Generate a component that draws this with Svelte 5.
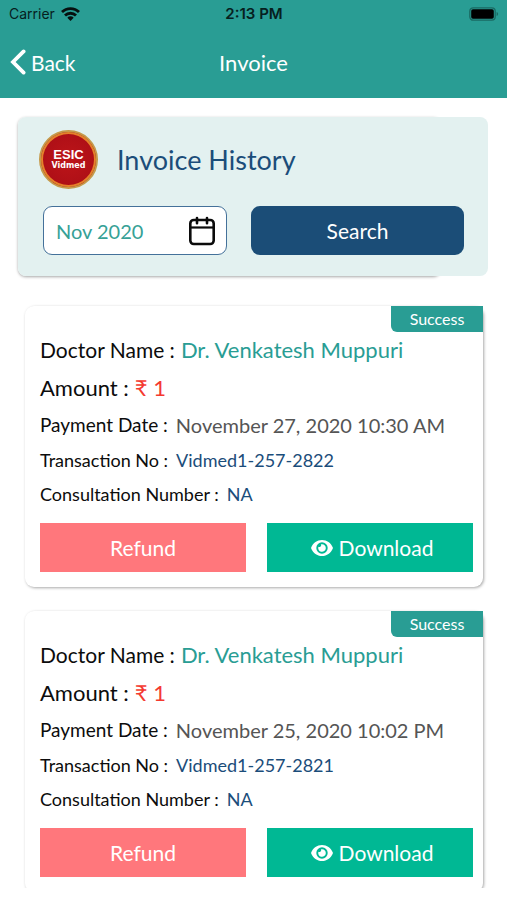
<script>
  let month = $state('Nov 2020');

  const invoices = [
    { doctor: 'Dr. Venkatesh Muppuri', amount: '₹ 1', date: 'November 27, 2020 10:30 AM', transaction: 'Vidmed1-257-2822', consultation: 'NA', status: 'Success' },
    { doctor: 'Dr. Venkatesh Muppuri', amount: '₹ 1', date: 'November 25, 2020 10:02 PM', transaction: 'Vidmed1-257-2821', consultation: 'NA', status: 'Success' }
  ];
</script>

<div class="screen">
  <header>
    <div class="status-bar">
      <div class="carrier">
        <span>Carrier</span>
        <svg width="19" height="14" viewBox="0 0 19 14" aria-hidden="true">
          <g fill="none" stroke="#06100f" stroke-width="2.8">
            <path d="M1 5.1a12 12 0 0 1 17 0" />
            <path d="M4 8.5a7.8 7.8 0 0 1 11 0" />
          </g>
          <path d="M6.3 10.7a4.5 4.5 0 0 1 6.4 0L9.5 13.9z" fill="#06100f" />
        </svg>
      </div>
      <span class="time">2:13 PM</span>
      <svg class="battery" width="30" height="14" viewBox="0 0 30 14" aria-hidden="true">
        <rect x="0.8" y="0.8" width="25.4" height="12.4" rx="3.4" fill="none" stroke="#1a6a63" stroke-width="1.3" />
        <rect x="2.2" y="2.2" width="22.6" height="9.6" rx="1.8" fill="#000" />
        <path d="M27.6 5v4c2-.7 2-3.3 0-4z" fill="#1a6a63" />
      </svg>
    </div>
    <nav>
      <a class="back" href="#back">
        <svg width="16" height="26" viewBox="0 0 16 26" aria-hidden="true">
          <path d="M13.6 2.4 3 13l10.600 10.600" fill="none" stroke="#fff" stroke-width="3.8" stroke-linecap="round" stroke-linejoin="miter" />
        </svg>
        <span>Back</span>
      </a>
      <h1>Invoice</h1>
    </nav>
  </header>

  <main>
    <section class="panel">
      <div class="panel-title">
        <div class="logo"><strong>ESIC</strong><span>Vidmed</span></div>
        <h2>Invoice History</h2>
      </div>
      <form class="filters" onsubmit={(e) => e.preventDefault()}>
        <div class="month">
          <input type="text" aria-label="Month" bind:value={month} />
          <button type="button" class="pick" aria-label="Choose month">
            <svg width="28" height="30" viewBox="0 0 28 30" fill="none" stroke="#0b0b0b" stroke-width="2.6" aria-hidden="true">
              <rect x="2.300" y="4" width="23.400" height="24" rx="3.500" />
              <path d="M2.300 11.500h23.400" stroke-width="2.200" />
              <path d="M9 2v5.200M19 2v5.200" stroke-linecap="round" />
            </svg>
          </button>
        </div>
        <button type="submit" class="search">Search</button>
      </form>
    </section>

    {#each invoices as invoice}
      <article>
        <span class="badge">{invoice.status}</span>
        <dl>
          <div class="row large"><dt>Doctor Name :</dt><dd class="teal">{invoice.doctor}</dd></div>
          <div class="row large amount"><dt>Amount :</dt><dd class="red">{invoice.amount}</dd></div>
          <div class="row medium"><dt>Payment Date :</dt><dd class="grey">{invoice.date}</dd></div>
          <div class="row"><dt>Transaction No :</dt><dd class="navy">{invoice.transaction}</dd></div>
          <div class="row"><dt>Consultation Number :</dt><dd class="navy">{invoice.consultation}</dd></div>
        </dl>
        <div class="actions">
          <button type="button" class="refund">Refund</button>
          <button type="button" class="download">
            <svg width="22" height="18" viewBox="0 0 22 18" aria-hidden="true">
              <path fill="#fff" fill-rule="evenodd" d="M11 1C6 1 2.200 4 0.300 8.300a1.600 1.600 0 0 0 0 1.400C2.200 14 6 17 11 17s8.800-3 10.700-7.300a1.600 1.600 0 0 0 0-1.400C19.800 4 16 1 11 1zm0 2.300a5.700 5.700 0 1 1 0 11.400 5.700 5.700 0 0 1 0-11.400z" />
              <path fill="#fff" d="M11 5.200a3.800 3.800 0 1 1-3.600 2.600A1.900 1.900 0 0 0 10 5.300z" />
            </svg>
            <span>Download</span>
          </button>
        </div>
      </article>
    {/each}
  </main>
</div>

<style>
  :global(body) {
    margin: 0;
    background: #fff;
  }
  .screen {
    height: 100vh;
    box-sizing: border-box;
    padding-bottom: 12px;
    display: flex;
    flex-direction: column;
    font-family: Lato, "Liberation Sans", sans-serif;
    color: #0c0c0c;
    overflow: hidden;
  }
  header {
    flex: none;
    background: #299d94;
  }
  .status-bar {
    height: 28px;
    padding: 0 8px 0 9px;
    display: grid;
    grid-template-columns: 1fr auto 1fr;
    align-items: center;
    font: 14px/28px Inter, sans-serif;
    color: #06201e;
  }
  .carrier {
    display: flex;
    align-items: center;
    gap: 6px;
  }
  .carrier svg {
    display: block;
  }
  .time {
    font-size: 15px;
    font-weight: 600;
  }
  .battery {
    justify-self: end;
  }
  nav {
    height: 68px;
    padding: 0 10px 2px;
    display: grid;
    grid-template-columns: 1fr auto 1fr;
    align-items: center;
    color: #fff;
  }
  .back {
    display: flex;
    align-items: center;
    gap: 5px;
    color: inherit;
    text-decoration: none;
    font-size: 21px;
  }
  h1,
  h2 {
    margin: 0;
    font-weight: 400;
  }
  h1 {
    font-size: 22px;
  }
  main {
    flex: 1;
    min-height: 0;
    padding: 19px 24px 0 25px;
    overflow: hidden;
    isolation: isolate;
  }
  .panel {
    position: relative;
    margin: 0 -5px 30px -7px;
    padding: 13px 24px 21px 21px;
    border-radius: 8px;
    background: #e3f1f0;
  }
  .panel::before {
    content: '';
    position: absolute;
    z-index: -1;
    inset: 0 10% 0 0;
    border-radius: 8px;
    box-shadow: 0 1px 3px rgba(0, 0, 0, 0.35);
  }
  .panel-title {
    display: flex;
    align-items: center;
    gap: 19px;
  }
  .logo {
    width: 59px;
    height: 59px;
    box-sizing: border-box;
    border: 2px solid #c59a4a;
    border-radius: 50%;
    background: radial-gradient(circle, #bd1519 0%, #b01017 60%, #a30d14 100%);
    box-shadow: inset 0 0 0 2px #e5812a;
    color: #fff;
    display: flex;
    flex-direction: column;
    align-items: center;
    justify-content: center;
    font-family: "Liberation Sans", Arial, sans-serif;
  }
  .logo strong {
    font-size: 13px;
    line-height: 12px;
  }
  .logo span {
    font: bold 8px/10px "DejaVu Sans", sans-serif;
  }
  h2 {
    font-size: 27px;
    color: #1b4d7a;
  }
  .filters {
    margin: 17px 0 0 4px;
    display: grid;
    grid-template-columns: minmax(0, 184fr) minmax(0, 213fr);
    gap: 24px;
  }
  .month {
    height: 49px;
    box-sizing: border-box;
    border: 1px solid #44719a;
    border-radius: 9px;
    background: #fff;
    display: flex;
    align-items: center;
    padding: 0 10px 0 12px;
  }
  .month input {
    flex: 1;
    width: 0;
    min-width: 0;
    padding: 0;
    border: 0;
    outline: 0;
    background: none;
    color: #36a196;
    font: 20px Lato, sans-serif;
  }
  button {
    border: 0;
    padding: 0;
    color: #fff;
    font: 21px Lato, sans-serif;
  }
  .pick {
    background: none;
    display: flex;
  }
  .search {
    height: 49px;
    border-radius: 9px;
    background: #1b4d77;
  }
  article {
    position: relative;
    margin-bottom: 24px;
    padding: 25px 10px 15px 15px;
    border-radius: 9px;
    background: #fff;
    box-shadow: 1px 1px 3px rgba(0, 0, 0, 0.34);
  }
  .badge {
    position: absolute;
    top: 0;
    right: 0;
    width: 92px;
    border-bottom-left-radius: 6px;
    background: #299d94;
    color: #fff;
    font-size: 16px;
    line-height: 26px;
    text-align: center;
  }
  dl {
    margin: 0;
  }
  .row {
    display: flex;
    gap: 8px;
    font-size: 18px;
    line-height: 34px;
  }
  .medium {
    font-size: 19px;
    line-height: 36px;
  }
  .medium dd {
    font-size: 20px;
  }
  .large {
    gap: 6px;
    font-size: 21px;
    line-height: 38px;
  }
  .large dd,
  .amount {
    font-size: 22px;
  }
  dd {
    margin: 0;
  }
  .teal {
    color: #299d94;
  }
  .red {
    color: #f4392f;
  }
  .grey {
    color: #555;
  }
  .navy {
    color: #1b4d7a;
  }
  .actions {
    margin-top: 12px;
    display: grid;
    grid-template-columns: 1fr 1fr;
    gap: 21px;
  }
  .actions button {
    height: 49px;
    display: flex;
    align-items: center;
    justify-content: center;
    gap: 6px;
  }
  .refund {
    background: #ff777c;
  }
  .actions .download {
    padding-left: 4px;
    background: #00b894;
  }
</style>
